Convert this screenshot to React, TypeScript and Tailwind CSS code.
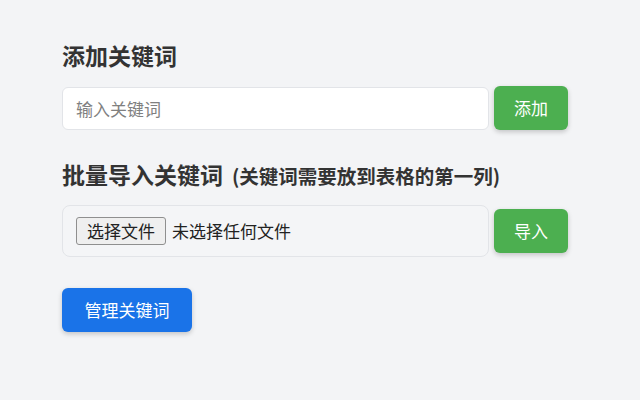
import React from "react";

export default function App() {
  const font = { fontFamily: '"Microsoft YaHei", "Noto Sans CJK SC", "Noto Sans", sans-serif' };
  return (
    <div className="w-[640px] h-[400px] bg-[#f3f4f6] overflow-hidden" style={font}>
      <div className="pl-[62px] pt-[38px] w-[568px] flex flex-col">
        <h2 className="text-[23px] leading-[34px] font-bold text-[#333]">添加关键词</h2>
        <div className="mt-[14px] flex items-center gap-[5px]">
          <input
            placeholder="输入关键词"
            className="w-[427px] h-[43px] rounded-[6px] border border-[#e2e4e8] bg-white px-[13px] text-[17px] text-[#333] placeholder:text-[#808080] outline-none"
          />
          <button className="w-[74px] h-[44px] rounded-[6px] bg-[#4caf50] text-white text-[17px] shadow-[0_2px_5px_rgba(0,0,0,0.2)]">
            添加
          </button>
        </div>
        <h2 className="mt-[27px] text-[23px] leading-[34px] font-bold text-[#333] flex items-baseline">
          <span>批量导入关键词</span>
          <span className="ml-[9px] text-[19.5px]">(关键词需要放到表格的第一列)</span>
        </h2>
        <div className="mt-[12px] flex items-center gap-[5px]">
          <div className="w-[427px] h-[52px] rounded-[8px] border border-[#e2e4e8] bg-[#f4f5f7] flex items-center pl-[13px]">
            <span className="h-[28px] px-[10px] flex items-center border border-[#8f8f8f] rounded-[3px] bg-[#efefef] text-[17px] text-[#222]">
              选择文件
            </span>
            <span className="ml-[6px] text-[17px] text-[#222]">未选择任何文件</span>
          </div>
          <button className="w-[74px] h-[44px] rounded-[6px] bg-[#4caf50] text-white text-[17px] shadow-[0_2px_5px_rgba(0,0,0,0.2)]">
            导入
          </button>
        </div>
        <div className="mt-[31px]">
          <button className="w-[130px] h-[44px] rounded-[6px] bg-[#1a73e8] text-white text-[17px] shadow-[0_2px_5px_rgba(0,0,0,0.2)]">
            管理关键词
          </button>
        </div>
      </div>
    </div>
  );
}
